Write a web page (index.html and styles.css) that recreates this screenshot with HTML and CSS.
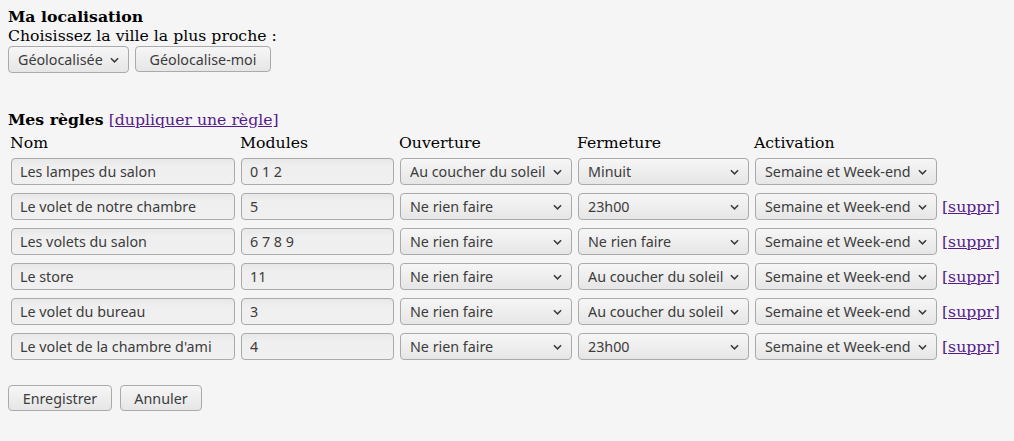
FILE: index.html
```html
<!DOCTYPE html>
<html lang="fr">
<head>
<meta charset="utf-8">
<title>Règles</title>
<link rel="stylesheet" href="styles.css">
</head>
<body>
<section class="loc">
  <div class="h"><strong>Ma localisation</strong></div>
  <div>Choisissez la ville la plus proche :</div>
  <div class="locrow">
    <span class="sel w-geo"><select class="ctl"><option>Géolocalisée</option></select><svg class="chev" viewBox="0 0 10 6"><path d="M1 1l4 4 4-4"/></svg></span>
    <button class="btn b-geo">Géolocalise-moi</button>
  </div>
</section>

<section class="rules">
  <div class="h"><strong>Mes règles</strong> <a href="#" class="lnk">[dupliquer une règle]</a></div>
  <div class="grid">
    <div class="th">Nom</div><div class="th">Modules</div><div class="th">Ouverture</div><div class="th">Fermeture</div><div class="th">Activation</div><div></div>

    <input class="ctl inp" value="Les lampes du salon"><input class="ctl inp" value="0 1 2">
    <span class="sel"><select class="ctl"><option>Au coucher du soleil</option></select><svg class="chev" viewBox="0 0 10 6"><path d="M1 1l4 4 4-4"/></svg></span>
    <span class="sel"><select class="ctl"><option>Minuit</option></select><svg class="chev" viewBox="0 0 10 6"><path d="M1 1l4 4 4-4"/></svg></span>
    <span class="sel"><select class="ctl"><option>Semaine et Week-end</option></select><svg class="chev" viewBox="0 0 10 6"><path d="M1 1l4 4 4-4"/></svg></span>
    <div></div>

    <input class="ctl inp" value="Le volet de notre chambre"><input class="ctl inp" value="5">
    <span class="sel"><select class="ctl"><option>Ne rien faire</option></select><svg class="chev" viewBox="0 0 10 6"><path d="M1 1l4 4 4-4"/></svg></span>
    <span class="sel"><select class="ctl"><option>23h00</option></select><svg class="chev" viewBox="0 0 10 6"><path d="M1 1l4 4 4-4"/></svg></span>
    <span class="sel"><select class="ctl"><option>Semaine et Week-end</option></select><svg class="chev" viewBox="0 0 10 6"><path d="M1 1l4 4 4-4"/></svg></span>
    <a href="#" class="lnk del">[suppr]</a>

    <input class="ctl inp" value="Les volets du salon"><input class="ctl inp" value="6 7 8 9">
    <span class="sel"><select class="ctl"><option>Ne rien faire</option></select><svg class="chev" viewBox="0 0 10 6"><path d="M1 1l4 4 4-4"/></svg></span>
    <span class="sel"><select class="ctl"><option>Ne rien faire</option></select><svg class="chev" viewBox="0 0 10 6"><path d="M1 1l4 4 4-4"/></svg></span>
    <span class="sel"><select class="ctl"><option>Semaine et Week-end</option></select><svg class="chev" viewBox="0 0 10 6"><path d="M1 1l4 4 4-4"/></svg></span>
    <a href="#" class="lnk del">[suppr]</a>

    <input class="ctl inp" value="Le store"><input class="ctl inp" value="11">
    <span class="sel"><select class="ctl"><option>Ne rien faire</option></select><svg class="chev" viewBox="0 0 10 6"><path d="M1 1l4 4 4-4"/></svg></span>
    <span class="sel"><select class="ctl"><option>Au coucher du soleil</option></select><svg class="chev" viewBox="0 0 10 6"><path d="M1 1l4 4 4-4"/></svg></span>
    <span class="sel"><select class="ctl"><option>Semaine et Week-end</option></select><svg class="chev" viewBox="0 0 10 6"><path d="M1 1l4 4 4-4"/></svg></span>
    <a href="#" class="lnk del">[suppr]</a>

    <input class="ctl inp" value="Le volet du bureau"><input class="ctl inp" value="3">
    <span class="sel"><select class="ctl"><option>Ne rien faire</option></select><svg class="chev" viewBox="0 0 10 6"><path d="M1 1l4 4 4-4"/></svg></span>
    <span class="sel"><select class="ctl"><option>Au coucher du soleil</option></select><svg class="chev" viewBox="0 0 10 6"><path d="M1 1l4 4 4-4"/></svg></span>
    <span class="sel"><select class="ctl"><option>Semaine et Week-end</option></select><svg class="chev" viewBox="0 0 10 6"><path d="M1 1l4 4 4-4"/></svg></span>
    <a href="#" class="lnk del">[suppr]</a>

    <input class="ctl inp" value="Le volet de la chambre d'ami"><input class="ctl inp" value="4">
    <span class="sel"><select class="ctl"><option>Ne rien faire</option></select><svg class="chev" viewBox="0 0 10 6"><path d="M1 1l4 4 4-4"/></svg></span>
    <span class="sel"><select class="ctl"><option>23h00</option></select><svg class="chev" viewBox="0 0 10 6"><path d="M1 1l4 4 4-4"/></svg></span>
    <span class="sel"><select class="ctl"><option>Semaine et Week-end</option></select><svg class="chev" viewBox="0 0 10 6"><path d="M1 1l4 4 4-4"/></svg></span>
    <a href="#" class="lnk del">[suppr]</a>
  </div>
</section>

<div class="actions">
  <button class="btn b-save">Enregistrer</button>
  <button class="btn b-cancel">Annuler</button>
</div>
</body>
</html>
```

FILE: styles.css
```css
html { background: #f5f5f5; }
body {
  margin: 7px 8px 8px;
  font-family: "DejaVu Serif", serif;
  font-size: 15.7px;
  line-height: 19px;
  color: #000;
}
.h { line-height: 19px; }
.locrow {
  display: flex;
  gap: 6px;
  margin-top: 1px;
}
.ctl {
  font-family: "Noto Sans", sans-serif;
  font-size: 14.3px;
  color: #3c3c3c;
  height: 27px;
  box-sizing: border-box;
  border: 1px solid #aaa;
  border-radius: 4px;
  margin: 0;
  outline: none;
}
.inp {
  background: linear-gradient(#e8e8e8, #efefef 30%, #f0f0f0);
  padding: 0 8px;
  width: 100%;
}
.sel { position: relative; display: block; }
.sel select {
  -webkit-appearance: none;
  appearance: none;
  width: 100%;
  padding: 0 22px 0 9px;
  background: linear-gradient(#f6f6f6, #e6e6e6);
}
.w-geo { width: 121px; }
.chev {
  position: absolute;
  right: 10px;
  top: 11px;
  width: 9px;
  height: 6px;
  fill: none;
  stroke: #3c3c3c;
  stroke-width: 1.7;
  pointer-events: none;
}
.btn {
  font-family: "Noto Sans", sans-serif;
  font-size: 14.3px;
  color: #3c3c3c;
  height: 26px;
  border: 1px solid #aaa;
  border-radius: 4px;
  background: linear-gradient(#f6f6f6, #e6e6e6);
  padding: 0;
  margin: 0;
}
.b-geo { width: 136px; }
.rules { margin-top: 37px; }
.lnk { color: #551a8b; text-decoration: underline; }
.grid {
  display: grid;
  grid-template-columns: 224px 153px 172px 171px 182px auto;
  column-gap: 6px;
  row-gap: 8px;
  margin-top: 4px;
  padding-left: 3px;
}
.th { margin-left: -1px; line-height: 19px; height: 17px; }
.del { align-self: center; margin-left: -1px; }
.actions {
  display: flex;
  gap: 8px;
  margin-top: 25px;
}
.b-save { width: 104px; }
.b-cancel { width: 82px; }
```
